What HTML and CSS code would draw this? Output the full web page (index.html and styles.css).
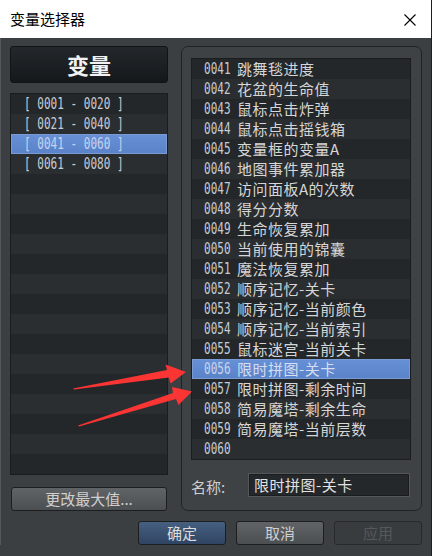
FILE: index.html
```html
<!DOCTYPE html>
<html lang="zh-CN">
<head>
    <meta charset="UTF-8">
    <title>变量选择器</title>
    <link rel="stylesheet" href="styles.css">
</head>
<body>
<div class="window">
    <div class="titleBar">
        <span class="titleText">变量选择器</span>
        <svg class="closeIcon" width="12" height="12" viewBox="0 0 12 12">
            <path d="M0.5 0.5 L11.5 11.5 M11.5 0.5 L0.5 11.5" stroke="#000" stroke-width="1.1" fill="none"/>
        </svg>
    </div>

    <div class="content">
        <div class="mainRow">
            <div class="leftCol">
                <div class="groupHeader">变量</div>
                <ul class="list groupList">
                    <li class="row"><span class="mono">[ 0001 - 0020 ]</span></li>
                    <li class="row"><span class="mono">[ 0021 - 0040 ]</span></li>
                    <li class="row selected"><span class="mono">[ 0041 - 0060 ]</span></li>
                    <li class="row"><span class="mono">[ 0061 - 0080 ]</span></li>
                    <li class="row"></li><li class="row"></li><li class="row"></li>
                    <li class="row"></li><li class="row"></li><li class="row"></li>
                    <li class="row"></li><li class="row"></li><li class="row"></li>
                    <li class="row"></li><li class="row"></li><li class="row"></li>
                    <li class="row"></li><li class="row"></li><li class="row"></li>
                </ul>
                <div class="btn btnGray btnMax">更改最大值...</div>
            </div>

            <div class="frame">
                <ul class="list varList">
                    <li class="row"><span class="mono num">0041</span><span class="name">跳舞毯进度</span></li>
                    <li class="row"><span class="mono num">0042</span><span class="name">花盆的生命值</span></li>
                    <li class="row"><span class="mono num">0043</span><span class="name">鼠标点击炸弹</span></li>
                    <li class="row"><span class="mono num">0044</span><span class="name">鼠标点击摇钱箱</span></li>
                    <li class="row"><span class="mono num">0045</span><span class="name">变量框的变量A</span></li>
                    <li class="row"><span class="mono num">0046</span><span class="name">地图事件累加器</span></li>
                    <li class="row"><span class="mono num">0047</span><span class="name">访问面板A的次数</span></li>
                    <li class="row"><span class="mono num">0048</span><span class="name">得分分数</span></li>
                    <li class="row"><span class="mono num">0049</span><span class="name">生命恢复累加</span></li>
                    <li class="row"><span class="mono num">0050</span><span class="name">当前使用的锦囊</span></li>
                    <li class="row"><span class="mono num">0051</span><span class="name">魔法恢复累加</span></li>
                    <li class="row"><span class="mono num">0052</span><span class="name">顺序记忆-关卡</span></li>
                    <li class="row"><span class="mono num">0053</span><span class="name">顺序记忆-当前颜色</span></li>
                    <li class="row"><span class="mono num">0054</span><span class="name">顺序记忆-当前索引</span></li>
                    <li class="row"><span class="mono num">0055</span><span class="name">鼠标迷宫-当前关卡</span></li>
                    <li class="row selected"><span class="mono num">0056</span><span class="name">限时拼图-关卡</span></li>
                    <li class="row"><span class="mono num">0057</span><span class="name">限时拼图-剩余时间</span></li>
                    <li class="row"><span class="mono num">0058</span><span class="name">简易魔塔-剩余生命</span></li>
                    <li class="row"><span class="mono num">0059</span><span class="name">简易魔塔-当前层数</span></li>
                    <li class="row"><span class="mono num">0060</span><span class="name"></span></li>
                </ul>
                <div class="nameRow">
                    <span class="nameLabel">名称:</span>
                    <div class="nameInput">限时拼图-关卡</div>
                </div>
            </div>
        </div>

        <div class="footer">
            <div class="btn btnBlue">确定</div>
            <div class="btn btnGray">取消</div>
            <div class="btn btnOff">应用</div>
        </div>
    </div>

    <!-- red annotation arrows -->
    <svg class="arrows" width="432" height="556" viewBox="0 0 432 556">
        <polygon fill="#fb3434" points="73,388.5 167,370 165.5,364.5 186,372 170.5,383.5 169,377.5 74,389.5"/>
        <polygon fill="#fb3434" points="78,425.5 173,393 172,387 192,391.5 178.5,405 176,399 79,426.5"/>
    </svg>
</div>
</body>
</html>
```

FILE: styles.css
```css
* {
    margin: 0;
    padding: 0;
    border: 0;
    box-sizing: border-box;
}

body {
    width: 432px;
    height: 556px;
    overflow: hidden;
    background: #3c3f42;
    font: 15px/20px "Noto Sans CJK SC", "Noto Sans", sans-serif;
    color: #d0d0d0;
}

ul {
    list-style: none;
}

.window {
    position: relative;
    width: 432px;
    height: 556px;
    border-right: 1px solid #1e1f21;
}

.titleBar {
    height: 38px;
    background: #fff;
    display: flex;
    align-items: center;
    justify-content: space-between;
    padding: 0 15px 0 10px;
}

.titleText {
    color: #000;
    font-size: 15px;
}

.closeIcon {
    display: block;
    margin-top: 1px;
}

.content {
    padding: 8px 9px 0 9px;
    border-left: 1px solid #55585b;
}

.mainRow {
    display: flex;
    gap: 13px;
}

.leftCol {
    width: 158px;
    display: flex;
    flex-direction: column;
}

.groupHeader {
    height: 37px;
    background: linear-gradient(#24272b, #15181b);
    border: 1px solid #111315;
    border-radius: 3px;
    color: #f2f2f2;
    font-size: 22px;
    font-weight: bold;
    line-height: 34px;
    text-align: center;
}

.list {
    border: 1px solid #1a1c1e;
    background: #232629;
}

.groupList {
    margin-top: 10px;
    height: 382px;
    overflow: hidden;
}

.row {
    height: 20px;
    display: flex;
    align-items: center;
    white-space: nowrap;
    background: #24272a;
}

.row:nth-child(even) {
    background: #2b2e31;
}

.row.selected {
    background: linear-gradient(#6890d6, #5a82c9);
    box-shadow: inset 0 0 0 1px #7a9ad4;
}

.mono {
    display: inline-block;
    font-family: "DejaVu Sans Mono", monospace;
    font-size: 15px;
    line-height: 20px;
    transform: scaleX(0.735);
    transform-origin: left center;
    color: #c6ccd4;
}

.groupList .row {
    padding-left: 13px;
}

.groupList .selected .mono {
    color: #c4d3ee;
}

.btn {
    height: 24px;
    border: 1px solid #1c1e20;
    border-radius: 3px;
    text-align: center;
    font-size: 15px;
    line-height: 22px;
}

.btnGray {
    background: linear-gradient(#616467, #4c4f52);
    color: #cfcfcf;
}

.btnBlue {
    background: linear-gradient(#46607f, #2f4463);
    color: #dcdcdc;
}

.btnOff {
    background: #393c3f;
    border-color: #27292b;
    color: #55585b;
}

.btnMax {
    margin: 12px 1px 0 1px;
}

.frame {
    width: 241px;
    height: 465px;
    border: 1px solid #202225;
    border-radius: 7px;
    background: #3f4245;
    padding: 11px 10px 0 9px;
}

.varList {
    height: 402px;
}

.varList .row {
    padding-left: 12px;
}

.num {
    width: 33px;
    flex: none;
}

.name {
    color: #d6d6d6;
    letter-spacing: 0.5px;
}

.varList .selected .num {
    color: #c8d4ea;
}

.varList .selected .name {
    color: #d4def0;
}

.nameRow {
    margin-top: 13px;
    display: flex;
    align-items: center;
}

.nameLabel {
    width: 57px;
    color: #cfcfcf;
    margin-top: 4px;
}

.nameInput {
    width: 162px;
    height: 24px;
    background: #25282b;
    border: 1px solid #55585b;
    box-shadow: inset 0 0 0 1px #1a1c1e;
    padding-left: 5px;
    line-height: 22px;
    color: #e2e2e2;
    letter-spacing: 0.5px;
}

.footer {
    margin-top: 10px;
    display: flex;
    justify-content: flex-end;
    gap: 10px;
}

.footer .btn {
    width: 88px;
}

.arrows {
    position: absolute;
    left: 0;
    top: 0;
    pointer-events: none;
}
```
